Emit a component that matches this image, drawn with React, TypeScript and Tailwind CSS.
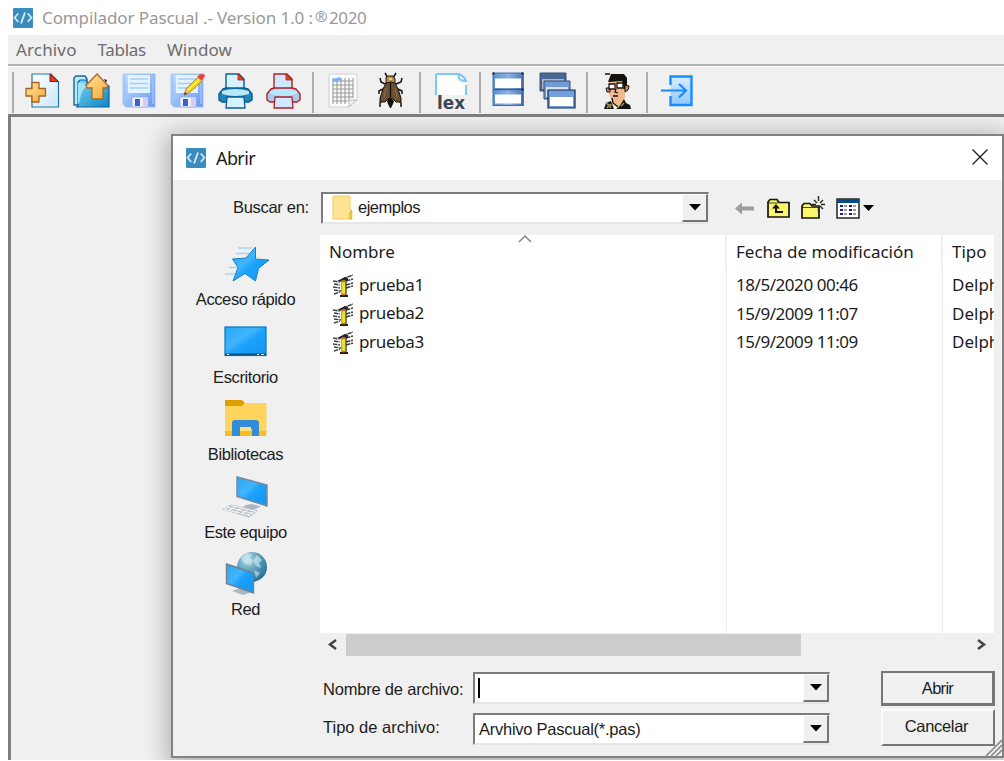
import React from "react";

type Cell = { x: number; w: number; children: React.ReactNode };

function ToolIcon({ x, w, children }: Cell) {
  return (
    <svg width={w} height={44} viewBox={`${x} 70 ${w} 44`} className="shrink-0">
      {children}
    </svg>
  );
}

function Sep({ className }: { className: string }) {
  return <div className={`h-[41px] w-[2px] shrink-0 bg-[#adadad] ${className}`} />;
}

function CodeLogo() {
  return (
    <svg width={20} height={20} viewBox="0 0 20 20" className="shrink-0">
      <rect width="20" height="20" rx="1" fill="#3b8cbe" />
      <g fill="none" stroke="#d3e8f5" strokeWidth="1.7">
        <path d="M5.3 5.5 1.500 9.700l3.800 4.200M14.700 5.500 18.500 9.700l-3.800 4.200" />
        <path d="M12 4.500 8 15.500" strokeWidth="1.9" />
      </g>
    </svg>
  );
}

function Floppy({ x }: { x: number }) {
  return (
    <g transform={`translate(${x} 74)`}>
      <path d="M0 0h32v33H3l-3-3z" fill="url(#floppy)" stroke="#8fb8f2" strokeWidth="0.8" />
      <path d="M5 1h22v18H5z" fill="#e2f3ff" />
      <path d="M7 5h18M7 9.5h18M7 14h18" stroke="#a6cff5" strokeWidth="1.7" />
      <path d="M2 2v28M30 2v28" stroke="#9cc4f7" strokeWidth="1.6" />
      <path d="M9 23h16v10H9z" fill="#f5f2ff" stroke="#8aa9f0" strokeWidth="0.8" />
      <path d="M12 25h5v7h-5z" fill="#3562cc" />
      <path d="M20 23h4v10h-4z" fill="#d7cdf1" />
    </g>
  );
}

function Printer({ x, line, body, paper }: { x: number; line: string; body: string; paper: string }) {
  return (
    <g transform={`translate(${x} 73)`} strokeLinejoin="round">
      <path d="M8 17V1h13l5 5v11z" fill={paper} stroke={line} strokeWidth="1.4" />
      <path d="M20 1v6h6z" fill="#ef4b14" stroke="#a31313" strokeWidth="0.8" />
      <path d="M8 15 5 16 1 21v6l3 2h27l3-2v-6l-4-5-4-1z" fill={body} stroke={line} strokeWidth="1.4" />
      <path d="M4 18Q17 14 31 18v3Q17 25 4 21z" fill="#b9e8f9" />
      <path d="M9 24h17l1 11H8z" fill={paper} stroke={line} strokeWidth="1.3" />
    </g>
  );
}

function Toolbar() {
  return (
    <div className="flex h-[48px] items-center border-t border-white bg-[#f0f0f0] pt-[3px]">
      <Sep className="ml-[4px] mr-[4px]" />
      <ToolIcon x={18} w={48}>
        <path d="M32 74h19l7.5 8v25H32z" fill="url(#page)" stroke="#2475a2" strokeWidth="1.2" />
        <path d="M50 74v7.5h8.5z" fill="#eb3e10" stroke="#7c1313" />
        <path d="M32 82.5h7v6h6.5v7.5H39v6h-7v-6h-6v-7.500h6z" fill="url(#gold)" stroke="#a76321" strokeWidth="1.3" strokeLinejoin="round" />
      </ToolIcon>
      <ToolIcon x={66} w={49}>
        <path d="M74 105V78l2-2h9l2 3v26z" fill="#b9eafb" stroke="#15669a" strokeWidth="1.4" />
        <path d="M78 106V82l2-2h6l3 6h20v21H77z" fill="url(#folder)" stroke="#10639d" strokeWidth="1.2" />
        <path d="M78 103V83h6l2 4q-5 3-7 17" fill="#9ee2f6" />
        <path d="m97 74 11 11.500-1.500 2.500H103v11H92V88h-5l-1-2.500z" fill="url(#gold)" stroke="#a66b25" strokeWidth="1.3" />
        <path d="M104 79l3 1-1 3" fill="#222" />
      </ToolIcon>
      <ToolIcon x={115} w={48}><Floppy x={123} /></ToolIcon>
      <ToolIcon x={163} w={48}>
        <Floppy x={171} />
        <path d="m184 95 2-6 12-12 4 4-12 11z" fill="#ffd700" stroke="#9c8740" />
        <path d="m188 90 12-11" stroke="#fff05c" strokeWidth="1.5" />
        <path d="m184 95 2-6 4 3z" fill="#e6b979" />
        <path d="m184 95 1-3 2 2z" fill="#382a20" />
        <path d="m197 77 3-3h4l1 2-3 5z" fill="#e54042" stroke="#d99da0" strokeWidth=".7" />
      </ToolIcon>
      <ToolIcon x={211} w={48}><Printer x={218} line="#0d5b90" body="#1f86b7" paper="#d6f4ff" /></ToolIcon>
      <ToolIcon x={259} w={50}><Printer x={266} line="#af2027" body="#a7caee" paper="#cfe7ff" /></ToolIcon>
      <Sep className="ml-[3px] mr-[2px]" />
      <ToolIcon x={316} w={54}>
        <path d="M329 74h28v25l-8 8h-20z" fill="#fbfbfb" stroke="#d0d0d0" />
        <g stroke="#9a9a9a" strokeWidth="1.1">
          <path d="M333 81h20M333 85h20M333 89h20M333 93h20M333 97h20M333 101h15" />
          <path d="M333 78v26M337 78v26M341 78v26M345 78v26M349 78v22M353 78v20" />
        </g>
        <path d="M333 80h3l2-1h3" fill="none" stroke="#6fb0fb" strokeWidth="3" />
        <path d="M349 107v-7h8z" fill="#eee" stroke="#bcbcbc" />
      </ToolIcon>
      <ToolIcon x={370} w={45}>
        <g fill="none" stroke="#15110e" strokeWidth="1.5">
          <path d="m388 78-3-5M393 78l3-5M385 84l-4-2-1-4M396 84l5-2 1-4M383 89l-4 2v3M398 89l4 2v3M383 99l-3 4v4M397 99l4 4v4" />
        </g>
        <path d="m386 77 2-1h5l2 3v5h-9z" fill="#bb8d50" stroke="#1b160e" />
        <path d="m386 83-3 6-3 9v4h5l3-3h5l3 3h5v-4l-3-9-3-6-4-1z" fill="#6a5136" stroke="#18110c" />
        <path d="m386 88-2 10M395 88l2 10" stroke="#8c6c49" />
        <path d="m387 101 3-4 4 4-1 3-2 4h-1l-2-4z" fill="#18110c" />
        <path d="M389 78h3v2h-3z" fill="#f1c175" />
        <path d="M390.500 83v14" stroke="#140f0b" strokeWidth="1.4" />
      </ToolIcon>
      <Sep className="ml-[4px] mr-[2px]" />
      <ToolIcon x={423} w={52}>
        <path d="M436 95V75q0-1 1.500-1H459l7 8v13z" fill="#fff" />
        <path d="M436 95V75q0-1 1.500-1H459M466 85v10M459 74q-2 7 7 7-1-4-7-7" fill="none" stroke="#78c9fa" strokeWidth="2" />
        <text x="437" y="108.500" fontFamily="'DejaVu Sans', sans-serif" fontSize="17" fontWeight="bold" textLength="28" lengthAdjust="spacingAndGlyphs" fill="#3c4754">lex</text>
      </ToolIcon>
      <Sep className="ml-[4px] mr-[1px]" />
      <ToolIcon x={483} w={49}>
        <rect x="494" y="73" width="30" height="32.500" fill="url(#winbar)" stroke="#426fac" />
        <path d="M496 78.500h26v9.500h-26zM496 94.500h26v9h-26z" fill="#fff" />
        <path d="M494 89.500h30M524 73v33" stroke="#3c5f92" strokeWidth="1.3" />
        <path d="M493.500 72.500h2v2h-2zM522.500 72.500h2v2h-2zM522.500 88.500h2v2h-2z" fill="#0b1c3b" />
      </ToolIcon>
      <ToolIcon x={532} w={53}>
        <path d="M541 73h26v18h-26z" fill="#4a6794" stroke="#35527e" />
        <path d="M543 79h22v10h-22z" fill="#b7b7b9" />
        <path d="M545 81h26v18h-26z" fill="#6e9bd7" stroke="#304c7c" />
        <path d="M547 87h22v10h-22z" fill="#dfdfe2" />
        <path d="M549 90h27v18h-27z" fill="#739fda" stroke="#102b56" strokeWidth="1.2" />
        <path d="M551 97h23v9h-23z" fill="#fff" />
      </ToolIcon>
      <Sep className="ml-[2px] mr-[3px]" />
      <ToolIcon x={592} w={53}>
        <path d="m610 81 12-1 4 6v11l-3 7-3 4-7-6-3-9z" fill="#f1b98d" />
        <path d="m609 82 3-8h13l3 4v8l-3 4-2-9z" fill="#15120f" />
        <path d="M606 74h5" stroke="#17100c" strokeWidth="1.500" />
        <path d="m626 85 4 1-1 4-3 2zM607 88h4v4h-3z" stroke="#17100c" fill="#d98d60" />
        <path d="M610 84h6v5h-6zM618 83h6v5h-6z" fill="#fff" stroke="#1d1510" strokeWidth="1.3" />
        <path d="M617 89l-1 3 3 1M614 96h5M613 98l1 5 5 4" stroke="#17120d" fill="none" strokeWidth="1.300" />
        <path d="m605 109 2-6 5-2 3 8zM617 109l3-2 5-8 2 4 4 2 1 4z" fill="#14120c" />
        <path d="m607 103 3 2-2 3M612 104l-1 4M622 106l3-3" fill="none" stroke="#93904d" strokeWidth="1.700" />
      </ToolIcon>
      <Sep className="ml-[2px] mr-[3px]" />
      <ToolIcon x={652} w={48}>
        <path d="M671.500 85v-8.500h21V105h-21v-9" fill="url(#exit)" stroke="#188bff" strokeWidth="2.400" />
        <path d="M662 90.500h24M680 84l7 6.500-7 7" fill="none" stroke="#188bff" strokeWidth="2.200" />
      </ToolIcon>
    </div>
  );
}

const places = [
  {
    name: "Acceso rápido",
    art: <>
      <path d="M238 248h14M236 253.500h13M236 260h5M225 274h13M229 267.500h9" stroke="#a4d4f2" strokeWidth="1.500" />
      <path d="M255.500 247v12l13.500 1-10.500 8.500-3 12.500-10.500-7.500-12 7.500 5-13.500-5.500-8.500 13.500-1z" fill="url(#blue)" stroke="#1585c9" strokeLinejoin="round" />
    </>,
  },
  {
    name: "Escritorio",
    art: <g transform="translate(0 -77.5)">
      <rect x="225" y="326.500" width="41" height="28.500" fill="url(#blue)" stroke="#0878bb" strokeWidth="1.200" />
      <path d="M225 354h41" stroke="#075687" strokeWidth="2.200" /><path d="M227 354h2M257 354h2M261 354h3" stroke="#fff" />
    </g>,
  },
  {
    name: "Bibliotecas",
    art: <g transform="translate(0 -155)">
      <path d="M225 400h17l3 3-3 4h-17z" fill="#dda000" /><path d="M225 406h17l3-3h21.500v32H225z" fill="#ffd45d" />
      <path d="M225 431h41v5h-41z" fill="#f7bd23" />
      <path d="M232 436v-13q0-3 3-3h21q3 0 3 3v13h-7v-7h-12v7z" fill="#338cd5" />
      <path d="M240 427h11v4h-11z" fill="#ffe184" />
    </g>,
  },
  {
    name: "Este equipo",
    art: <g transform="translate(0 -232.500)">
      <path d="M243 506q5-3 11-2l7 2-7 3-8-1z" fill="#aab6bf" /><path d="m237 476.500 30 8v21l-30-9.500z" fill="url(#blue)" stroke="#788796" strokeWidth="1.400" />
      <path d="m222 509 9-5 27 6-9 7z" fill="#b6bfc5" />
      <path d="m225 509 25 6M228 507l25 6M231 505l25 6M229 506l-5 3M235 506l-6 4M241 508l-6 4M248 509l-6 4M254 511l-6 4" stroke="#fff" strokeWidth=".9" />
    </g>,
  },
  {
    name: "Red",
    art: <g transform="translate(0 -310)">
      <circle cx="252" cy="567" r="15" fill="url(#globe)" />
      <path d="m241 558 5-5 6 1-3 4 4 2-2 5-6-1zM257 555l5 5-3 3 2 5-5-2-3-5zM254 570l6 3-4 5z" fill="#d7edf4" opacity=".6" />
      <path d="m232 591 8-3 12 4-9 3z" fill="#a9b8c2" />
      <path d="m226.500 564 27 9v20l-27-9.500z" fill="url(#blue)" stroke="#70818e" strokeWidth="1.400" />
    </g>,
  },
];

const files = [
  { name: "prueba1", date: "18/5/2020 00:46" },
  { name: "prueba2", date: "15/9/2009 11:07" },
  { name: "prueba3", date: "15/9/2009 11:09" },
];

function FileIcon() {
  return (
    <svg width={22} height={26} viewBox="0 0 22 26" className="shrink-0">
      <path d="m1 9 6 1 6-4 8-3M2 12l6 1M1 15l7 1M2 18l7 1M2 22l6-2M14 9l7-2M14 13l7-2M14 16l7-2" fill="none" stroke="#3a3d40" strokeWidth="1.400" strokeDasharray="4.500 .8" />
      <path d="m5 9 8-4 3 1v3H8z" fill="#26262a" />
      <path d="M10 8.500h3.500V23H10z" fill="#efe52a" /><path d="M14 8.500V24" stroke="#3c391c" strokeWidth="1.300" /><path d="M9.700 9v14" stroke="#8a7e30" strokeWidth=".8" />
      <path d="M8 23h8v2H8z" fill="#282018" /><path d="M10 9.500h3M10 22.500h3" stroke="#d86832" strokeWidth="1.500" />
    </svg>
  );
}

function DropButton() {
  return (
    <div className="flex h-full w-[26px] shrink-0 items-center justify-center border-b-2 border-l border-r-2 border-t border-b-[#777] border-l-white border-r-[#777] border-t-white bg-[#f0f0f0]">
      <svg width="12" height="7" viewBox="0 0 12 7"><path d="M0 0h12L6 6.500z" fill="#000" /></svg>
    </div>
  );
}

function Combo({ className, children }: { className: string; children?: React.ReactNode }) {
  return (
    <div className={`flex items-center border-b-2 border-l-2 border-r border-t-2 border-b-[#e6e6e6] border-l-[#7c7c7c] border-r-[#ededed] border-t-[#7c7c7c] bg-white ${className}`}>
      <div className="flex h-full min-w-0 flex-1 items-center whitespace-nowrap">{children}</div>
      <DropButton />
    </div>
  );
}

function NavIcons() {
  return (
    <svg width={142} height={32} viewBox="734 191 142 32" className="shrink-0">
      <path d="m736 207.500 7-6v4h12v4h-12v4z" fill="#9d9d9d" />
      <g fill="#fbf76a" stroke="#151510" strokeWidth="1.700">
        <path d="M769 216v-15l2-2.500h7l2 3h10V216z" /><path d="M803 217v-12l2-2.500h6l2 2.500h7v12z" />
      </g>
      <path d="M769 202h10M803 206.500h17" stroke="#151510" strokeWidth=".8" />
      <path d="m777 203-4 4.500h3v4.500h8v-2h-6v-2.500h3z" fill="#111" />
      <path d="M819.500 195v5M819.500 207v4M813 203.500h4M822 203.500h4M815 199l3 3M821 205l3 3M824 199l-3 3" stroke="#26261e" strokeWidth="1.400" />
      <rect x="838" y="198" width="22" height="19" fill="#fff" stroke="#252525" strokeWidth="1.500" />
      <path d="M838 198h22v4h-22z" fill="#054a83" />
      <path d="M841 205h3M841 209h3M841 213h3M850 205h3M850 209h3M850 213h3" stroke="#1919a2" strokeWidth="2" />
      <path d="M845 205h3M845 209h3M845 213h3M854 205h3M854 209h3M854 213h3" stroke="#333" strokeWidth="1.200" />
      <path d="M864 204h11l-5.500 6z" fill="#000" />
    </svg>
  );
}

function Dialog() {
  return (
    <div className="absolute left-[171px] top-[134px] flex h-[624px] w-[833px] flex-col border-2 border-[#828282] bg-[#f0f0f0] shadow-[0_4px_22px_4px_rgba(0,0,0,0.28)]">
      <div className="flex h-[44px] shrink-0 items-center bg-white pl-[13px] pr-[13px]">
        <CodeLogo />
        <span className="ml-[10px] text-[18px] tracking-[-0.6px]">Abrir</span>
        <svg width={18} height={18} viewBox="0 0 18 18" className="mb-[2px] ml-auto"><path d="m1.500 1.500 15 15m0-15-15 15" stroke="#222" strokeWidth="1.400" /></svg>
      </div>
      <div className="flex h-[55px] shrink-0 items-center font-['Liberation_Sans',sans-serif] text-[16.5px]">
        <span className="w-[148px] pl-[60px] whitespace-nowrap tracking-[-0.3px]">Buscar en:</span>
        <Combo className="h-[32px] w-[388px]">
          <svg width={22} height={26} viewBox="0 0 22 26" className="ml-[9px]"><path d="M1 1h17v14l2 1v8H1z" fill="#ffe394" stroke="#f4cd56" /><path d="M17.500 24v-6l2-3v9z" fill="#f5ce53" stroke="#e8bb3b" /></svg>
          <span className="ml-[4px] tracking-[-0.5px]">ejemplos</span>
        </Combo>
        <div className="ml-[24px]"><NavIcons /></div>
      </div>
      <div className="flex h-[421px] shrink-0">
        <div className="flex w-[147px] shrink-0 flex-col gap-[5.500px] pt-[3px] font-['Liberation_Sans',sans-serif] text-[16.5px]">
          {places.map((p) => (
            <div key={p.name} className="flex h-[72px] shrink-0 flex-col items-center pr-[2px]">
              <svg width={60} height={50} viewBox="216 238 60 50" className="shrink-0">{p.art}</svg>
              <span className="h-[22px] leading-[23px] tracking-[-0.4px] whitespace-nowrap">{p.name}</span>
            </div>
          ))}
        </div>
        <div className="flex w-[674px] flex-col">
          <div className="relative flex h-[398px] flex-col overflow-hidden bg-white text-[17px]">
            <svg width="14" height="8" viewBox="0 0 14 8" className="absolute left-[198px] top-0"><path d="m1 7 6-6 6 6" fill="none" stroke="#888" strokeWidth="1.500" /></svg>
            <div className="grid h-[36px] shrink-0 grid-cols-[407px_216px_51px] leading-[34px] whitespace-nowrap">
              <div className="border-r-2 border-[#eeeeee] pl-[9px]">Nombre</div>
              <div className="border-r-2 border-[#eeeeee] pl-[9px]">Fecha de modificación</div>
              <div className="pl-[9px]">Tipo</div>
            </div>
            <div className="grid flex-1 grid-cols-[407px_216px_51px] whitespace-nowrap">
              <div className="flex flex-col border-r border-[#e4f0fb] pl-[12px]">
                {files.map((f) => <div key={f.name} className="flex h-[28.500px] items-center"><FileIcon /><span className="ml-[5px] pb-[2px] tracking-[-0.35px]">{f.name}</span></div>)}
              </div>
              <div className="flex flex-col border-r border-[#e4f0fb] pl-[9px]">
                {files.map((f) => <div key={f.name} className="h-[28.500px] leading-[28px] tracking-[-0.45px]">{f.date}</div>)}
              </div>
              <div className="flex flex-col overflow-hidden pl-[9px]">
                {files.map((f) => <div key={f.name} className="h-[28.500px] leading-[28px]">Delph</div>)}
              </div>
            </div>
          </div>
          <div className="flex h-[23px] items-center">
            <svg width="26" height="23" viewBox="0 0 26 23"><path d="m16 7-6 4.500 6 4.500" fill="none" stroke="#444" strokeWidth="2.500" /></svg>
            <div className="h-[22px] w-[455px] bg-[#cdcdcd]" />
            <svg width="26" height="23" viewBox="0 0 26 23" className="ml-auto"><path d="m10 7 6 4.500-6 4.500" fill="none" stroke="#444" strokeWidth="2.500" /></svg>
          </div>
        </div>
      </div>
      <div className="flex flex-1 pl-[150px] pr-[7px] pt-[15px] font-['Liberation_Sans',sans-serif] text-[16.5px]">
        <div className="flex w-[150px] shrink-0 flex-col gap-[8px] whitespace-nowrap tracking-[-0.2px]">
          <div className="flex h-[32px] items-center pt-[4px]">Nombre de archivo:</div>
          <div className="flex h-[32px] items-center pt-[1px] tracking-[0px]">Tipo de archivo:</div>
        </div>
        <div className="flex w-[357px] flex-col gap-[9px] pt-[1px]">
          <Combo className="h-[32px]"><div className="ml-[3px] h-[20px] w-[1.500px] bg-black" /></Combo>
          <Combo className="h-[32px]"><span className="ml-[4px] pt-[1px] tracking-[-0.25px]">Arvhivo Pascual(*.pas)</span></Combo>
        </div>
        <div className="ml-auto flex w-[114px] flex-col gap-[3px]">
          <div className="flex h-[35px] items-center justify-center border-2 border-b-[3px] border-r-[3px] border-[#777] tracking-[-0.7px]">Abrir</div>
          <div className="flex h-[37px] items-center justify-center border-b-2 border-l-2 border-r-2 border-t-2 border-b-[#777] border-l-white border-r-[#777] border-t-white pb-[3px] pr-[3px] tracking-[-0.3px]">Cancelar</div>
        </div>
      </div>
      <svg width="17" height="17" viewBox="0 0 17 17" className="absolute bottom-0 right-0"><path d="M1 17 17 1M6 17 17 6M11 17l6-6" stroke="#888" strokeWidth="1.600" /></svg>
    </div>
  );
}

export default function App() {
  return (
    <div className="relative flex h-[761px] w-[1004px] flex-col overflow-hidden bg-white font-['Noto_Sans',sans-serif] text-[#1c1c1c]">
      <svg width="0" height="0" className="absolute">
        <defs>
          <linearGradient id="page" x1="0" y1="0" x2="1" y2="1"><stop stopColor="#fff" /><stop offset="1" stopColor="#c9e7fb" /></linearGradient>
          <linearGradient id="gold" x1="0" y1="0" x2="1" y2="1"><stop stopColor="#ffe599" /><stop offset="1" stopColor="#f8a63a" /></linearGradient>
          <linearGradient id="folder" x1="0" y1="0" x2="1" y2="1"><stop stopColor="#7cd6f1" /><stop offset="1" stopColor="#0c86c6" /></linearGradient>
          <linearGradient id="floppy" x1="0" y1="0" x2="1" y2="1"><stop stopColor="#c5e3ff" /><stop offset="1" stopColor="#6797f2" /></linearGradient>
          <linearGradient id="winbar" x1="0" y1="0" x2="1" y2="0"><stop stopColor="#5a8fce" /><stop offset=".5" stopColor="#8cb3e2" /><stop offset="1" stopColor="#4d7abb" /></linearGradient>
          <linearGradient id="exit" x1="0" y1="0" x2="0" y2="1"><stop stopColor="#d9edff" /><stop offset="1" stopColor="#8fc7fa" /></linearGradient>
          <linearGradient id="blue" x1="0" y1="0" x2="1" y2="1"><stop stopColor="#28a9f7" /><stop offset=".4" stopColor="#41b4fb" /><stop offset=".55" stopColor="#1aa2fb" /><stop offset="1" stopColor="#1794ed" /></linearGradient>
          <radialGradient id="globe" cx=".35" cy=".25" r=".8"><stop stopColor="#b7dbe7" /><stop offset=".6" stopColor="#4c94b5" /><stop offset="1" stopColor="#286d92" /></radialGradient>
        </defs>
      </svg>
      <header className="flex h-[35px] shrink-0 items-center pl-[13px]">
        <CodeLogo />
        <div className="ml-[9px] flex items-center text-[17px] whitespace-nowrap text-[#999]">
          <span className="tracking-[-0.1px]">Compilador Pascual .- Version 1.0 :</span>
          <span className="ml-[2px] mb-[2px] w-[14px] text-[15px]">®</span>
          <span className="tracking-[-0.4px]">2020</span>
        </div>
      </header>
      <div className="ml-[8px] flex flex-1 flex-col">
        <nav className="flex h-[31px] shrink-0 items-center gap-[21px] border-b-2 border-[#b4b4b4] bg-[#f0f0f0] pl-[8px] text-[17px] text-[#6d6d6d]">
          <span className="tracking-[0.15px]">Archivo</span><span className="tracking-[-0.3px]">Tablas</span><span className="tracking-[0.1px]">Window</span>
        </nav>
        <Toolbar />
        <main className="mb-[1px] flex-1 border-l-[3px] border-t-[3px] border-[#7e7e7e] bg-[#f0f0f0]" />
      </div>
      <Dialog />
      <div className="absolute inset-x-0 bottom-0 h-[1px] bg-white" />
    </div>
  );
}
